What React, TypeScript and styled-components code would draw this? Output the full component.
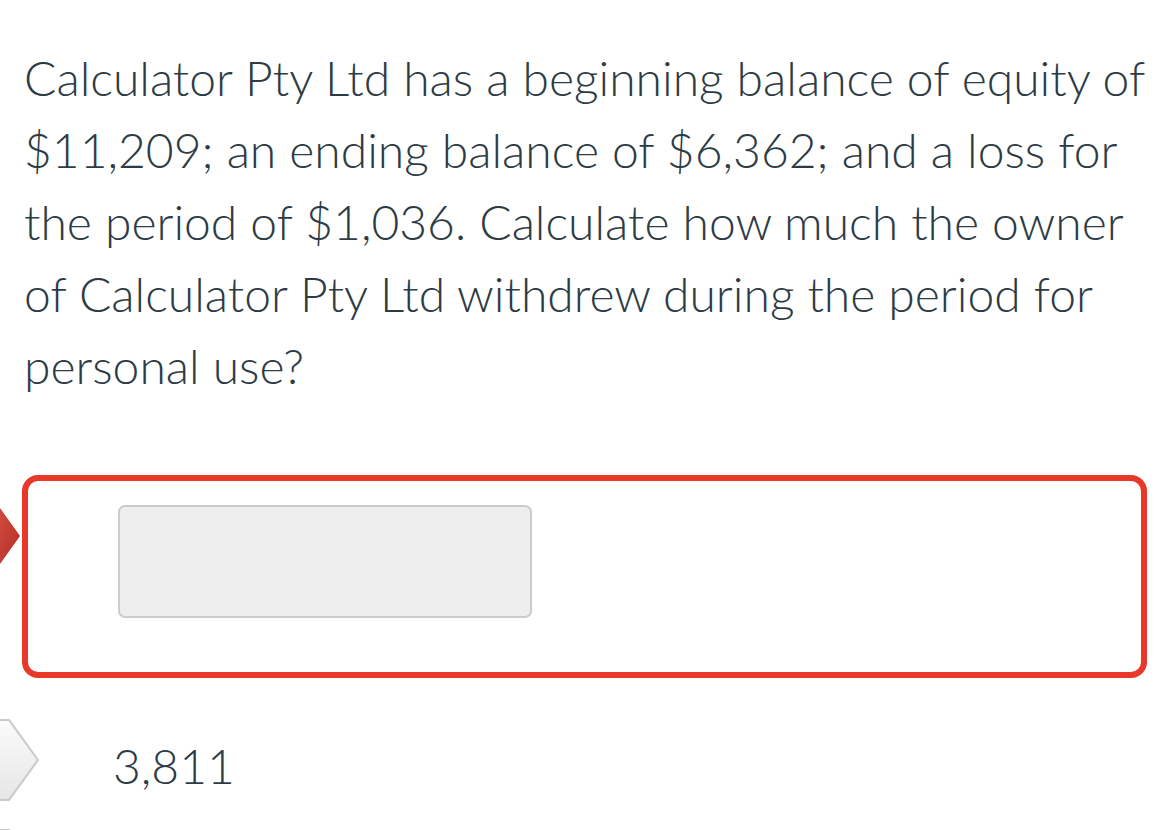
import styled, { createGlobalStyle } from "styled-components";

const GlobalStyle = createGlobalStyle`
  html, body {
    margin: 0;
    padding: 0;
    background: #ffffff;
  }
  body {
    font-family: "Lato Light", "Lato", "Open Sans", sans-serif;
    color: #2d3b45;
    overflow: hidden;
  }
`;

const answers = [
  { id: "a1", text: "3,811" },
  { id: "a2", text: "" },
];

export default function App() {
  return (
    <>
      <GlobalStyle />
      <Page>
        <Question>
          Calculator Pty Ltd has a beginning balance of equity of $11,209; an ending balance of
          $6,362; and a loss for the period of $1,036. Calculate how much the owner of Calculator
          Pty Ltd withdrew during the period for personal use?
        </Question>
        <Answers>
          <SelectedRow>
            <RedArrow width="22" height="58" viewBox="0 0 22 58">
              <defs>
                <linearGradient id="redFill" x1="0" y1="0" x2="1" y2="1">
                  <stop offset="0" stopColor="#d24a3f" />
                  <stop offset="1" stopColor="#b22e28" />
                </linearGradient>
              </defs>
              <path d="M0 1 L20 29 L0 57 Z" fill="url(#redFill)" />
            </RedArrow>
            <AnswerInput />
          </SelectedRow>
          {answers.map((a) => (
            <AnswerRow key={a.id}>
              <GrayArrow width="42" height="84" viewBox="0 0 42 84">
                <defs>
                  <linearGradient id={`gray-${a.id}`} x1="0" y1="0" x2="0" y2="1">
                    <stop offset="0" stopColor="#fbfbfb" />
                    <stop offset="1" stopColor="#e6e6e6" />
                  </linearGradient>
                </defs>
                <path
                  d="M-2 2 H9 L38 42 L9 82 H-2 Z"
                  fill={`url(#gray-${a.id})`}
                  stroke="#c9c9c9"
                  strokeWidth="2"
                />
              </GrayArrow>
              <AnswerText>{a.text}</AnswerText>
            </AnswerRow>
          ))}
        </Answers>
      </Page>
    </>
  );
}

const Page = styled.div`
  padding: 42px 29px 0 24px;
`;

const Question = styled.p`
  margin: 0;
  font-size: 48px;
  font-weight: 300;
  line-height: 72px;
  color: #2d3b45;
`;

const Answers = styled.div`
  display: flex;
  flex-direction: column;
  margin-top: 73px;
  margin-left: -24px;
`;

const SelectedRow = styled.div`
  position: relative;
  display: flex;
  align-items: flex-start;
  margin-left: 22px;
  height: 203px;
  box-sizing: border-box;
  border: 6px solid #e8382a;
  border-radius: 16px;
  padding: 24px 0 0 90px;
`;

const RedArrow = styled.svg`
  position: absolute;
  left: -28px;
  top: 26px;
`;

const AnswerInput = styled.div`
  width: 414px;
  height: 113px;
  box-sizing: border-box;
  background: #eeeeee;
  border: 2px solid #cccccc;
  border-radius: 7px;
`;

const AnswerRow = styled.div`
  position: relative;
  display: flex;
  align-items: flex-start;
  height: 96px;
  box-sizing: border-box;
  margin-top: 40px;
  padding: 12px 0 0 113px;
  & + & {
    margin-top: 14px;
  }
`;

const GrayArrow = styled.svg`
  position: absolute;
  left: 0;
  top: 0;
`;

const AnswerText = styled.span`
  font-size: 48px;
  font-weight: 300;
  line-height: 72px;
  color: #2d3b45;
`;
